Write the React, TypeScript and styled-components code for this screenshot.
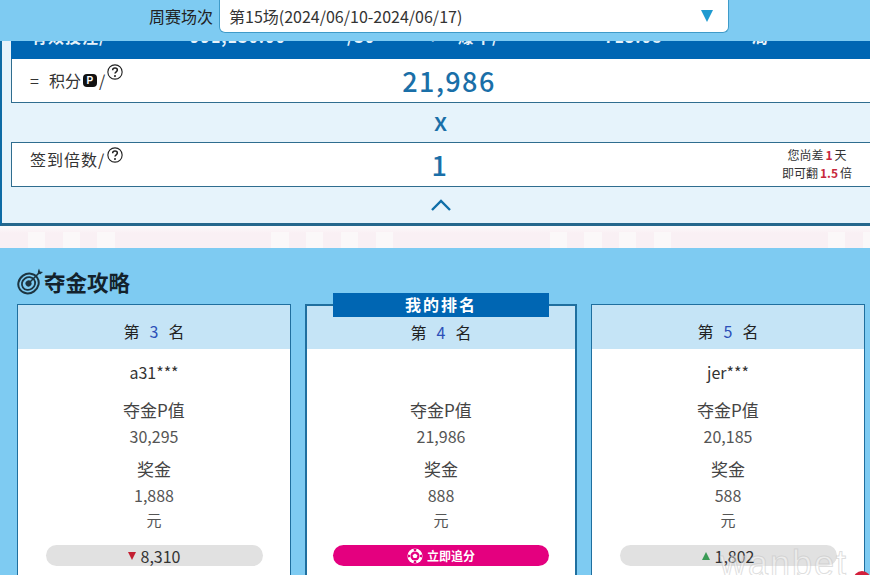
import styled, { createGlobalStyle } from 'styled-components';

const GlobalStyle = createGlobalStyle`
	html, body {
		margin: 0;
		padding: 0;
		height: 575px;
		overflow: hidden;
		background: #7ecbf2;
		font-family: 'Noto Sans CJK SC', 'Noto Sans', sans-serif;
	}
`;

const litCells = [2, 4, 6, 16, 18, 20, 22, 32, 34, 36, 38, 48, 50];

const players = [
	{ rank: 3, name: 'a31***', points: '30,295', prize: '1,888', diff: '8,310', dir: 'down' },
	{ rank: 4, name: '', points: '21,986', prize: '888', mine: true },
	{ rank: 5, name: 'jer***', points: '20,185', prize: '588', diff: '1,802', dir: 'up' },
];

function HelpIcon({ lift }: { lift: number }) {
	return (
		<HelpMark $lift={lift}>
			<svg width="16" height="16" viewBox="0 0 17 17">
				<circle cx="8.5" cy="8.5" r="7.6" fill="none" stroke="#222" strokeWidth="1.2" />
				<path d="M6 6.6c0-1.5 1.1-2.3 2.5-2.3S11 5.1 11 6.4c0 1.9-2.5 1.9-2.5 3.8" fill="none" stroke="#222" strokeWidth="1.6" />
				<circle cx="8.5" cy="12.7" r="1.1" fill="#222" />
			</svg>
		</HelpMark>
	);
}

function TargetIcon() {
	return (
		<svg width="27" height="27" viewBox="0 0 27 27">
			<g transform="rotate(-35 11.5 15.5)">
				<ellipse cx="11.5" cy="15.5" rx="10.5" ry="9.6" fill="none" stroke="#1d3440" strokeWidth="2" />
				<ellipse cx="11.5" cy="15.5" rx="6.8" ry="6.2" fill="none" stroke="#1d3440" strokeWidth="1.8" />
				<circle cx="11.5" cy="15.5" r="3" fill="#1d3440" />
			</g>
			<path d="M12 15L22 5" stroke="#1d3440" strokeWidth="1.6" />
			<path d="M21 3l1-2.5 1 3 3 .6-2.6 2.2-2.6-.6z" fill="#1d3440" />
		</svg>
	);
}

function ChipIcon() {
	return (
		<svg width="16" height="16" viewBox="0 0 16 16">
			<circle cx="8" cy="8" r="7.6" fill="#fff" />
			<circle cx="8" cy="8" r="4.6" fill="#e4007f" />
			<path d="M8 5.4l2.5 1.8-1 2.9h-3l-1-2.9z" fill="#fff" />
			<path d="M6.5 .8h3l-.5 2.2H7zM6.5 15.2h3L9 13H7zM.8 6.5v3L3 9V7zM15.2 6.5v3L13 9V7z" fill="#e4007f" />
		</svg>
	);
}

export default function App() {
	return (
		<>
			<GlobalStyle />
			<TopBar>
				<SelectLabel>周赛场次</SelectLabel>
				<Select>
					<span>第15场(2024/06/10-2024/06/17)</span>
					<Caret />
				</Select>
			</TopBar>
			<Panel>
				<HeadRow>
					<HeadText>
						<span>有效投注/</span>
						<span>991,130.00</span>
						<span>/30</span>
						<span>+</span>
						<span>爆牛/</span>
						<span>715.08</span>
						<span>局</span>
					</HeadText>
				</HeadRow>
				<PointsRow>
					<RowLabel>
						<Equal>=</Equal>积分<PBadge>P</PBadge>/<HelpIcon lift={16} />
					</RowLabel>
					<BigValue>21,986</BigValue>
				</PointsRow>
				<Times>x</Times>
				<BonusRow>
					<RowLabel $spaced>
						签到倍数/<HelpIcon lift={9} />
					</RowLabel>
					<BigValue>1</BigValue>
					<Note>
						<div>您尚差<b>1</b>天</div>
						<div>即可翻<b>1.5</b>倍</div>
					</Note>
				</BonusRow>
				<Collapse>
					<svg width="22" height="14" viewBox="0 0 22 14">
						<path d="M2 12l9-9 9 9" fill="none" stroke="#0f6ea8" strokeWidth="2.4" />
					</svg>
				</Collapse>
			</Panel>
			<Strip>
				{Array.from({ length: 51 }, (_, i) => (
					<Cell key={i} $lit={litCells.includes(i)} />
				))}
			</Strip>
			<Section>
				<Title>
					<TargetIcon />
					夺金攻略
				</Title>
				<Cards>
					{players.map((p) => (
						<Card key={p.rank} $mine={p.mine}>
							{p.mine && <MineTag>我的排名</MineTag>}
							<CardHead $mine={p.mine}>
								第<RankNum>{p.rank}</RankNum>名
							</CardHead>
							<CardBody>
								<Player>{p.name}</Player>
								<Label>夺金P值</Label>
								<Amount>{p.points}</Amount>
								<Label>奖金</Label>
								<Amount>{p.prize}</Amount>
								<Unit>元</Unit>
								{p.mine ? (
									<BoostButton>
										<ChipIcon />
										立即追分
									</BoostButton>
								) : (
									<DiffPill>
										<Arrow $dir={p.dir} />
										{p.diff}
									</DiffPill>
								)}
							</CardBody>
						</Card>
					))}
				</Cards>
			</Section>
			<Watermark>wanbet</Watermark>
			<RedDot />
		</>
	);
}

const TopBar = styled.div`
	height: 41px;
	display: flex;
	align-items: flex-start;
	padding-left: 149px;
	gap: 6px;
	background: #7ecbf2;
`;

const SelectLabel = styled.div`
	font-size: 16px;
	line-height: 33px;
	color: #222;
`;

const Select = styled.div`
	width: 510px;
	height: 33px;
	box-sizing: border-box;
	background: #fff;
	border: 1px solid #3f9bc9;
	border-top: 0;
	border-radius: 0 0 6px 6px;
	display: flex;
	align-items: center;
	justify-content: space-between;
	padding: 0 15px 0 9px;
	font-size: 16px;
	color: #333;
`;

const Caret = styled.i`
	width: 0;
	height: 0;
	border-left: 6px solid transparent;
	border-right: 6px solid transparent;
	border-top: 12px solid #1f9ad0;
`;

const Panel = styled.div`
	background: #e6f3fb;
	border-left: 2px solid #0d6ba5;
	border-bottom: 3px solid #25678d;
	padding-left: 9px;
	height: 182px;
`;

const HeadRow = styled.div`
	height: 18px;
	background: #0066b3;
	overflow: hidden;
`;

const HeadText = styled.div`
	display: grid;
	grid-template-columns: 159px 157px 81px 30px 146px 148px 40px;
	padding-left: 20px;
	margin-top: -14px;
	font-size: 16px;
	letter-spacing: 1px;
	line-height: 18px;
	font-weight: 700;
	white-space: nowrap;
	color: #e8f2f9;
`;

const ResultRow = styled.div`
	position: relative;
	box-sizing: border-box;
	background: #fff;
	border-left: 1px solid #2f6d8f;
	border-bottom: 1px solid #2f6d8f;
	display: flex;
	align-items: center;
	justify-content: center;
`;

const PointsRow = styled(ResultRow)`
	height: 44px;
	padding-left: 18px;
`;

const BonusRow = styled(ResultRow)`
	height: 45px;
	border-top: 1px solid #2f6d8f;
`;

const RowLabel = styled.div<{ $spaced?: boolean }>`
	position: absolute;
	left: 18px;
	top: ${(p) => (p.$spaced ? '4px' : '9px')};
	display: flex;
	align-items: center;
	font-size: 16px;
	letter-spacing: ${(p) => (p.$spaced ? '1px' : '0')};
	line-height: 24px;
	color: #333;
`;

const Equal = styled.span`
	margin-right: 10px;
`;

const PBadge = styled.span`
	width: 14px;
	height: 13px;
	margin: 0 2px;
	border-radius: 4px;
	background: #111;
	color: #fff;
	font-family: 'Liberation Sans', sans-serif;
	font-size: 10px;
	font-weight: 700;
	line-height: 13px;
	text-align: center;
`;

const HelpMark = styled.span<{ $lift: number }>`
	display: inline-flex;
	margin: -${(p) => p.$lift}px 0 0 2px;
`;

const BigValue = styled.div`
	font-size: 27px;
	font-weight: 500;
	letter-spacing: 1.4px;
	line-height: 42px;
	color: #1a6fa8;
	margin-right: 2px;
`;

const Times = styled.div`
	height: 39px;
	text-align: center;
	font-size: 25px;
	font-weight: 500;
	line-height: 34px;
	color: #1a6fa8;
`;

const Note = styled.div`
	position: absolute;
	right: 18px;
	top: 3px;
	font-size: 12px;
	line-height: 18px;
	color: #333;
	text-align: center;
	b {
		color: #c8283c;
		margin: 0 2px;
	}
`;

const Collapse = styled.div`
	height: 36px;
	display: flex;
	align-items: center;
	justify-content: center;
	box-sizing: border-box;
`;

const Strip = styled.div`
	height: 22px;
	box-sizing: border-box;
	padding-top: 6px;
	display: flex;
	overflow: hidden;
	background: linear-gradient(#fbfafc 0, #faf3f6 5px, #f9f0f4 7px);
`;

const Cell = styled.div<{ $lit: boolean }>`
	width: 17.4px;
	flex: none;
	height: 16px;
	background: ${(p) => (p.$lit ? '#fbf8f9' : 'transparent')};
	&:first-child {
		margin-left: -7px;
	}
`;

const Section = styled.div`
	height: 327px;
	padding: 18px 5px 0 17px;
	background: #7ecbf2;
	overflow: hidden;
`;

const Title = styled.div`
	display: flex;
	align-items: center;
	height: 30px;
	font-size: 21.5px;
	font-weight: 700;
	color: #13222c;
`;

const Cards = styled.div`
	display: grid;
	grid-template-columns: 274px 272px 274px;
	gap: 14px;
	margin-top: 8px;
`;

const Card = styled.div<{ $mine?: boolean }>`
	position: relative;
	height: 300px;
	box-sizing: border-box;
	background: #fff;
	border: ${(p) => (p.$mine ? '2px' : '1px')} solid #1f6f9f;
`;

const MineTag = styled.div`
	position: absolute;
	top: -13px;
	left: 26px;
	width: 216px;
	height: 24px;
	background: #0066b3;
	color: #fff;
	font-size: 16px;
	font-weight: 700;
	letter-spacing: 2px;
	line-height: 22px;
	text-align: center;
`;

const CardHead = styled.div<{ $mine?: boolean }>`
	height: ${(p) => (p.$mine ? '43px' : '44px')};
	background: #c5e4f6;
	display: flex;
	align-items: center;
	justify-content: center;
	font-size: 16px;
	color: #222;
	padding-top: 8px;
	box-sizing: border-box;
`;

const RankNum = styled.span`
	margin: 0 10px;
	color: #2c4fb8;
`;

const CardBody = styled.div`
	display: flex;
	flex-direction: column;
	align-items: center;
	padding-top: 11px;
	color: #444;
`;

const Player = styled.div`
	height: 25px;
	font-size: 16px;
	line-height: 25px;
	color: #333;
	margin-bottom: 12px;
`;

const Label = styled.div`
	font-size: 17px;
	line-height: 25px;
	margin-bottom: 1px;
	color: #444;
`;

const Amount = styled.div`
	font-size: 16px;
	line-height: 27px;
	margin-bottom: 6px;
	color: #555;
`;

const Unit = styled.div`
	font-size: 15px;
	line-height: 23px;
	margin-top: -7px;
	margin-bottom: 14px;
	color: #555;
`;

const DiffPill = styled.div`
	width: 217px;
	height: 21px;
	border-radius: 11px;
	background: #e1e1e1;
	display: flex;
	align-items: center;
	justify-content: center;
	gap: 5px;
	font-size: 16px;
	color: #333;
`;

const Arrow = styled.i<{ $dir?: string }>`
	width: 0;
	height: 0;
	border-left: 4.5px solid transparent;
	border-right: 4.5px solid transparent;
	${(p) => (p.$dir === 'down' ? 'border-top: 8px solid #c31f32;' : 'border-bottom: 8px solid #3a9a55;')}
`;

const BoostButton = styled.div`
	width: 216px;
	height: 21px;
	border-radius: 11px;
	background: #e4007f;
	display: flex;
	align-items: center;
	justify-content: center;
	gap: 4px;
	font-size: 12px;
	font-weight: 700;
	color: #fff;
`;

const Watermark = styled.div`
	position: absolute;
	left: 720px;
	top: 543px;
	font-family: 'Liberation Sans', sans-serif;
	font-size: 36px;
	letter-spacing: 2px;
	-webkit-text-stroke: 1px rgba(190, 190, 190, 0.5);
	-webkit-text-fill-color: rgba(255, 255, 255, 0.4);
	pointer-events: none;
`;

const RedDot = styled.div`
	position: absolute;
	left: 853px;
	top: 571px;
	width: 18px;
	height: 18px;
	border-radius: 50%;
	background: #d3203c;
`;
